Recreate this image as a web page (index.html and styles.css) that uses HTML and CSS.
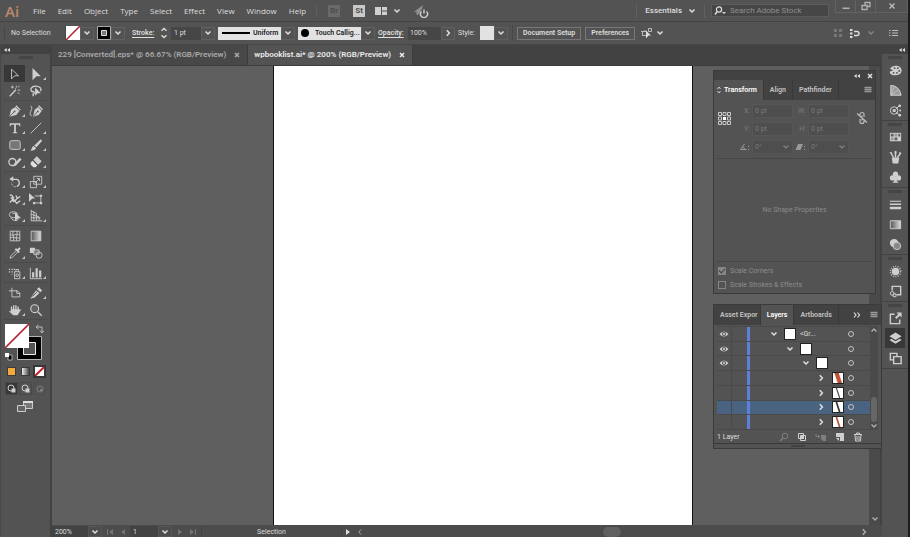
FILE: index.html
```html
<!DOCTYPE html>
<html lang="en">
<head>
<meta charset="utf-8">
<title>wpbooklist.ai</title>
<link rel="stylesheet" href="styles.css">
</head>
<body>
<svg class="symbols" aria-hidden="true">
  <symbol id="down" viewBox="0 0 8 8"><path d="M1.5 2.5 4 5l2.5-2.5" fill="none" stroke="currentColor" stroke-width="1.5"/></symbol>
  <symbol id="right" viewBox="0 0 8 8"><path d="M2.8 1.2 5.4 4 2.8 6.8" fill="none" stroke="currentColor" stroke-width="1.5"/></symbol>
  <symbol id="left" viewBox="0 0 8 8"><path d="M5 1.5 2.8 4 5 6.5" fill="none" stroke="currentColor"/></symbol>
  <symbol id="collapse" viewBox="0 0 8 8"><path d="M3.700 2v4L1 4zM7 2v4L4.300 4z" fill="currentColor"/></symbol>
  <symbol id="cross" viewBox="0 0 8 8"><path d="m2 2 4 4M6 2 2 6" fill="none" stroke="currentColor" stroke-width="1.5"/></symbol>
  <symbol id="menu" viewBox="0 0 8 8"><path d="M.5 1.5h7M.5 3.5h7M.5 5.5h7" stroke="currentColor" stroke-width="1.4"/></symbol>
  <symbol id="eye" viewBox="0 0 10 8"><path d="M.5 4Q5-1 9.500 4 5 9 .5 4z" fill="#cfcfcf"/><circle cx="5" cy="4" r="2" fill="#505050"/><circle cx="5" cy="4" r="1" fill="#ddd"/></symbol>
</svg>
<div class="app">
  <header class="menubar">
    <span class="logo">Ai</span>
    <nav class="menus">
      <button>File</button><button>Edit</button><button>Object</button><button>Type</button><button>Select</button><button>Effect</button><button>View</button><button>Window</button><button>Help</button>
    </nav>
    <button class="badge dim">Br</button>
    <button class="badge">St</button>
    <button class="arrange" aria-label="Arrange documents"><svg width="13" height="10" viewBox="0 0 13 10"><path d="M0 1h6v8H0zM7 1h5v3.500H7zM7 5.500h5V9H7z" fill="#d0d0d0"/></svg><svg class="chev"><use href="#down"/></svg></button>
    <button class="gpu" aria-label="GPU performance"><svg width="16" height="14" viewBox="0 0 16 14"><path d="M1 8 10 1 9 5l-4 5H3l1-2z" fill="#909090"/><path d="m4 11 3-4" stroke="#a0a0a0"/><path d="M8.500 7.500a3.500 3.500 0 1 0 5 0M11 5.500v4" fill="none" stroke="#d0d0d0" stroke-width="1.400"/></svg></button>
    <div class="menubar-end">
      <button class="workspace">Essentials <svg class="chev"><use href="#down"/></svg></button>
      <label class="search"><svg width="13" height="10" viewBox="0 0 13 10"><circle cx="5" cy="3.500" r="2.600" fill="none" stroke="#ddd" stroke-width="1.200"/><path d="M3.300 5.500 1 8.500" stroke="#ddd" stroke-width="1.500"/><path d="M8 6h4l-2 2z" fill="#ddd"/></svg><input type="search" placeholder="Search Adobe Stock" aria-label="Search Adobe Stock"></label>
      <div class="window-buttons">
        <button aria-label="Minimize"><svg width="10" height="10" viewBox="0 0 10 10"><path d="M1.500 6.500h7v1.600h-7z" fill="#b0b0b0"/></svg></button>
        <button aria-label="Restore"><svg width="10" height="10" viewBox="0 0 10 10"><path d="M1 4.500h5v4H1zM4 4V1.500h5v4H6" fill="none" stroke="#b0b0b0" stroke-width="1.300"/></svg></button>
        <button class="wide" aria-label="Close"><svg width="10" height="10" viewBox="0 0 10 10"><path d="m2.500 2.500 5 5M7.500 2.500l-5 5" stroke="#bbb" stroke-width="1.400"/></svg></button>
      </div>
    </div>
  </header>

  <section class="controlbar" aria-label="Control">
    <span class="selection">No Selection</span>
    <button class="swatch none" aria-label="Fill"><svg width="14" height="14" viewBox="0 0 14 14"><path d="M0 0h14v14H0z" fill="#fff"/><path d="M0 14 14 0" stroke="#b01f2b" stroke-width="1.500"/></svg></button>
    <button class="drop gap-lg" aria-label="Fill options"><svg class="chev"><use href="#down"/></svg></button>
    <button class="swatch" aria-label="Stroke color"><svg width="14" height="14" viewBox="0 0 14 14"><path d="M.5.500h13v13H.5z" fill="#000" stroke="#aaa"/><path d="M4.500 4.500h5v5h-5z" fill="#777" stroke="#ddd"/></svg></button>
    <button class="drop gap-lg" aria-label="Stroke options"><svg class="chev"><use href="#down"/></svg></button>
    <label class="link stroke-label" for="stroke">Stroke:</label>
    <button class="stepper" aria-label="Step stroke width"><svg width="10" height="14" viewBox="0 0 10 14"><path d="M2.500 4.800 5 2.500l2.500 2.300M2.500 9.200 5 11.500l2.500-2.300" fill="none" stroke="#ddd" stroke-width="1.400"/></svg></button>
    <input class="field stroke-field" id="stroke" value="1 pt">
    <button class="drop gap-sm" aria-label="Stroke widths"><svg class="chev"><use href="#down"/></svg></button>
    <div class="profile"><span class="profile-line"></span><select aria-label="Width profile"><option>Uniform</option></select></div>
    <button class="drop gap-sm" aria-label="Width profiles"><svg class="chev"><use href="#down"/></svg></button>
    <div class="profile brush"><span class="brush-dot"></span><select aria-label="Brush"><option>Touch Callig...</option></select></div>
    <button class="drop gap-sm" aria-label="Brushes"><svg class="chev"><use href="#down"/></svg></button>
    <label class="link opacity-label" for="opacity">Opacity:</label>
    <input class="field opacity-field" id="opacity" value="100%">
    <button class="drop gap-lg" aria-label="Opacity slider"><svg class="chev"><use href="#right"/></svg></button>
    <span class="style-label">Style:</span>
    <button class="swatch style-swatch" aria-label="Graphic style"></button>
    <button class="drop" aria-label="Graphic styles"><svg class="chev"><use href="#down"/></svg></button>
    <span class="divider"></span>
    <button class="push">Document Setup</button>
    <button class="push">Preferences</button>
    <button class="similar" aria-label="Select similar"><svg width="13" height="12" viewBox="0 0 13 12"><path d="M1.500 4.500h4v4h-4zM7.500 1.500h3v3h-3zM0 4.500h2M4 3v2" fill="none" stroke="#bbb"/><path d="m5 3.500 5 5H7.500L5 11.500z" fill="#ddd"/></svg></button>
    <svg class="chev"><use href="#down"/></svg>
    <div class="controlbar-end">
      <svg width="10" height="10" viewBox="0 0 10 10"><path d="M1 1h3v3H1zM6 1h3v3H6zM1 6h3v3H1zM6 6h3v3H6z" fill="#777"/></svg>
      <svg width="12" height="11" viewBox="0 0 12 11"><path d="M1 1h2.500v2H1zM1 4.500h2.500v2H1zM1 8h2.500v2H1z" fill="#ddd"/><path d="M5 3.500h3a2 2 0 0 1 0 4H5" fill="none" stroke="#ddd" stroke-width="1.400"/></svg>
      <svg class="chev faint"><use href="#down"/></svg>
      <button class="options" aria-label="Control menu"><svg width="9" height="8" viewBox="0 0 9 8"><path d="M0 1.500h1.500M3 1.500h6M0 4h1.500M3 4h6M0 6.500h1.500M3 6.500h6" stroke="#bbb"/></svg></button>
    </div>
  </section>

  <main class="body">
    <aside class="tools" aria-label="Tools">
      <div class="strip"><svg class="chev"><use href="#collapse"/></svg></div>
      <div class="grip"></div>
      <div class="tool-group">
        <button class="on" aria-label="Selection"><svg viewBox="0 0 16 16"><path d="m4 2.500 8 7.500H7.500L4 13.500z" class="line"/></svg></button>
        <button class="fly" aria-label="Direct selection"><svg viewBox="0 0 16 16"><path d="m4 1 9.500 9.500H8.500L4 15z"/></svg></button>
        <button aria-label="Magic wand"><svg viewBox="0 0 16 16"><path d="m2 14 7-7.500" class="thick"/><path d="M5 2v3M3.500 3.500h3M9.500 2v2M13 2l-1.500 2M11 7h3M11 10l2 1M8 4.500l1 1" class="line"/></svg></button>
        <button aria-label="Lasso"><svg viewBox="0 0 16 16"><path d="M4 9C0 7 3 2 8 2.500s7 3 5 5.500M3.500 9c2-2 4 2 1 2.500L5 14" class="line thick"/><path d="m7 4 6.500 6.500H10L7 13.500z"/></svg></button>
      </div>
      <div class="tool-group">
        <button class="fly" aria-label="Pen"><svg viewBox="0 0 16 16"><path d="m1.500 14.500 2-8 5-3 4.500 4.500-3.500 4.500z"/><path d="m9 2 5 5" class="thick"/><path d="m2 14 5-5" stroke="#535353"/><circle cx="7.500" cy="8.500" r="1" fill="#535353"/></svg></button>
        <button aria-label="Curvature"><svg viewBox="0 0 16 16"><path d="m4.500 14.500 2-8 4-3 4 4.500-3.500 4.500z"/><path d="m11 2 4.500 4.500" class="thick"/><path d="M2 2c4 4-4 8 1 12" class="line"/><path d="m5 14 4.500-5" stroke="#535353"/><circle cx="10" cy="8.500" r="1" fill="#535353"/></svg></button>
        <button class="fly" aria-label="Type"><svg viewBox="0 0 16 16"><path d="M2 2.500h12V6h-1l-.500-1.700H9v8.200l1.500.500v1h-5v-1L7 12.500V4.300H3.500L3 6H2z"/></svg></button>
        <button class="fly" aria-label="Line segment"><svg viewBox="0 0 16 16"><path d="M2 14 14 2" class="line"/></svg></button>
        <button class="fly" aria-label="Rounded rectangle"><svg viewBox="0 0 16 16"><rect x="2" y="3" width="12" height="10" rx="2" fill="#777" stroke="#d0d0d0"/></svg></button>
        <button class="fly" aria-label="Paintbrush"><svg viewBox="0 0 16 16"><path d="m13.500 1.500 1.500 1.500-6.500 7.500-2.500-2zM5.500 9 8 11.500c-1 3-4 3-7 3 2.500-1 2-5 4.500-5.500z"/></svg></button>
        <button class="fly" aria-label="Shaper"><svg viewBox="0 0 16 16"><circle cx="5" cy="8" r="4" class="line thick"/><path d="m6 13 1-3 6.500-7 2 2L9 12z"/></svg></button>
        <button class="fly" aria-label="Eraser"><svg viewBox="0 0 16 16"><path d="m9 1.500 5.500 5.500L10.500 11 5 5.500z"/><path d="m4 6.500 5.500 5.500-2 2H5L2 11V8.500z" fill="#e0e0e0"/></svg></button>
      </div>
      <div class="tool-group">
        <button class="fly" aria-label="Rotate"><svg viewBox="0 0 16 16"><path d="M4 5h6a4.200 4.200 0 0 1 0 8" class="line thick"/><path d="M9 13.500c-3 0-5-2-5-5" class="line" stroke-dasharray="1.500 1"/><path d="M6 1.500v6L1.500 4.500z"/></svg></button>
        <button class="fly" aria-label="Scale"><svg viewBox="0 0 16 16"><path d="M5.500 1.500h9v9h-9zM1.500 7.500h7v7h-7zM7 9l5-5M9 4h3v3" class="line"/></svg></button>
        <button class="fly" aria-label="Width"><svg viewBox="0 0 16 16"><path d="M2 4c3-2 4 2 3 4s2 4 4 1 3-2 5-4M2 12l4-4 4 5 4-3M9 4l2 4M3 7l4-1" class="line thick"/></svg></button>
        <button aria-label="Free transform"><svg viewBox="0 0 16 16"><path d="M6.500 4.500h7v8h-8" class="line"/><path d="M12.500 3h2.500v2.500h-2.500zM12.500 11.500h2.500v2.500h-2.500zM4.500 11.500h2.500v2.500h-2.500zM0 1l7 6.500H4L0 11z"/></svg></button>
        <button class="fly" aria-label="Shape builder"><svg viewBox="0 0 16 16"><ellipse cx="6" cy="6.500" rx="4.500" ry="3.500" class="line"/><path d="M4 10c0 4 8 4 8 1M5 5h6" class="line"/><path d="m8 4 7 6.500h-3.500L8 14z"/></svg></button>
        <button class="fly" aria-label="Perspective grid"><svg viewBox="0 0 16 16"><path d="M2.500 1v12.500H15M5.500 3v10M2.500 2l6 3v8M2.500 6l9 3v4M2.500 10H13" class="line"/></svg></button>
      </div>
      <div class="tool-group">
        <button aria-label="Mesh"><svg viewBox="0 0 16 16"><path d="M2.500 2.500h11v11h-11zM6 2.500C4 7 8 9 6 13.500M10 2.500c2 4-2 7 0 11M2.500 6c4 3 7-2 11 1M2.500 10c4-2 7 2 11 0" class="line"/></svg></button>
        <button aria-label="Gradient"><svg viewBox="0 0 16 16"><defs><linearGradient id="grad"><stop stop-color="#555"/><stop offset="1" stop-color="#ddd"/></linearGradient></defs><path d="M2.500 2.500h11v11h-11z" fill="url(#grad)" stroke="#ccc"/></svg></button>
        <button class="fly" aria-label="Eyedropper"><svg viewBox="0 0 16 16"><path d="m9 2.500 2 1 2-2 1.500 1.500-2 2 1 2-1.500 1L7.500 4z"/><path d="m9 5.500-6 6L2.500 14 5 13l6-6" class="line"/></svg></button>
        <button aria-label="Blend"><svg viewBox="0 0 16 16"><path d="M1 2h6v6H1z"/><path d="M5.500 4.500h6v5h-6z" fill="#777" stroke="#ccc"/><circle cx="11.500" cy="10.500" r="3.500" class="line"/></svg></button>
      </div>
      <div class="tool-group">
        <button class="fly" aria-label="Symbol sprayer"><svg viewBox="0 0 16 16"><path d="M7.500 6.500h6v8h-6zM9 6V4h3v2" class="line"/><circle cx="10.500" cy="10.500" r="1.500" class="line"/><path d="M1 3h1.500v1.500H1zM4 3h1.500v1.500H4zM6.500 3H8v1.500H6.500zM1 6h1.500v1.500H1zM4 6h1.500v1.500H4zM4 9h1v1H4z"/></svg></button>
        <button class="fly" aria-label="Column graph"><svg viewBox="0 0 16 16"><path d="M1.500 2v12.500H15" class="line"/><path d="M3.500 7H6v6H3.500zM7.500 2.500H10V13H7.500zM11.500 5H14v8h-2.500z"/></svg></button>
      </div>
      <div class="tool-group">
        <button aria-label="Artboard"><svg viewBox="0 0 16 16"><path d="M4.500 2v10.500h9V8l-3-2.500H1" class="line"/><path d="M10 5v3.500h3.500" class="line"/></svg></button>
        <button class="fly" aria-label="Slice"><svg viewBox="0 0 16 16"><path d="M1.500 14.500 8 5l4 3-5.500 5zM9 3.500l2.500-2L15 5l-2 2z"/><path d="m4 12 5-5" stroke="#535353"/></svg></button>
        <button class="fly" aria-label="Hand"><svg viewBox="0 0 16 16"><path d="M4 9V4M6.500 8V2.500M9 8V2.500M11.500 9V4" class="thick"/><path d="M3.200 7h9L15 7.500 11 14H6L1 9.500l1.500-.500 1 1z"/></svg></button>
        <button aria-label="Zoom"><svg viewBox="0 0 16 16"><circle cx="6.500" cy="6.500" r="4.500" fill="#626262" stroke="#d0d0d0" stroke-width="1.300"/><path d="m10 10 4.500 4.500" class="thick"/></svg></button>
      </div>
      <button class="paint" aria-label="Fill and stroke"><svg width="40" height="40" viewBox="0 0 40 40"><path d="M13.500 13.500h24v23h-24z" fill="#000" stroke="#b5b5b5"/><path d="M19.500 19.500h12v12h-12z" fill="#555" stroke="#eee"/><path d="M1 1h24v24H1z" fill="#fff"/><path d="M1 25 25 1" stroke="#b01f2b" stroke-width="1.700"/><path d="M33 4h5v5M34.500 2 32 4l2.500 2M36 7.500l2 2.500 2-2.500" fill="none" stroke="#bbb"/><path d="M4 32h4v5H4z" fill="#000" stroke="#aaa"/><path d="M1 30h4v4H1z" fill="#fff"/></svg></button>
      <div class="mini-row">
        <button aria-label="Color"><i class="chip orange"></i></button><button aria-label="Gradient fill"><i class="chip ramp"></i></button><button class="on" aria-label="None"><svg width="9" height="9" viewBox="0 0 9 9"><path d="M0 0h9v9H0z" fill="#fff"/><path d="m0 9 9-9" stroke="#c4202b" stroke-width="2"/></svg></button>
      </div>
      <div class="mini-row modes">
        <button class="on" aria-label="Draw normal"><svg width="10" height="10" viewBox="0 0 10 10"><circle cx="4" cy="4" r="3" class="line"/><path d="M4.500 4.500h4v4h-4z"/></svg></button><button aria-label="Draw behind"><svg width="10" height="10" viewBox="0 0 10 10"><path d="M4.500 4.500h4v4h-4z"/><circle cx="4" cy="4" r="3" fill="#555" class="line"/></svg></button><button class="faint" aria-label="Draw inside"><svg width="10" height="10" viewBox="0 0 10 10"><circle cx="5" cy="5" r="3" class="line"/><path d="M5 5h2v2H5z"/></svg></button>
      </div>
      <button class="screen" aria-label="Screen mode"><svg width="17" height="12" viewBox="0 0 17 12"><path d="M6.500.500h9v7h-9z" fill="#777" stroke="#ccc"/><path d="M.5 4.500h8v6h-8z" fill="#666" stroke="#ccc"/><path d="M6 1h10" stroke="#ddd" stroke-width="2"/></svg></button>
    </aside>

    <section class="document">
      <div class="tabs">
        <div class="tab"><span>229 [Converted].eps* @ 66.67% (RGB/Preview)</span><button aria-label="Close tab"><svg class="chev"><use href="#cross"/></svg></button></div>
        <div class="tab active"><span>wpbooklist.ai* @ 200% (RGB/Preview)</span><button aria-label="Close tab"><svg class="chev"><use href="#cross"/></svg></button></div>
      </div>
      <div class="view">
        <div class="canvas"><div class="artboard"></div></div>
        <div class="vscroll"><svg class="chev"><use href="#down"/></svg></div>

        <div class="panels">
          <section class="panel transform">
            <div class="panel-top"><svg class="chev"><use href="#collapse"/></svg><svg class="chev"><use href="#cross"/></svg></div>
            <div class="panel-tabs"><button class="on"><svg width="6" height="8" viewBox="0 0 6 8"><path d="m1.500 3 1.500-2 1.500 2M1.500 5 3 7l1.500-2" fill="none" stroke="#ccc"/></svg>Transform</button><button>Align</button><button>Pathfinder</button><svg class="panel-menu"><use href="#menu"/></svg></div>
            <div class="transform-fields">
              <svg class="refpoint" width="15" height="15" viewBox="0 0 15 15"><path d="M1.500 1.500h3v3h-3zM6 1.500h3v3H6zM10.500 1.500h3v3h-3zM1.500 6h3v3h-3zM10.500 6h3v3h-3zM1.500 10.500h3v3h-3zM6 10.500h3v3H6zM10.500 10.500h3v3h-3z" fill="none" stroke="#c8c8c8"/><path d="M6 6h3v3H6z" fill="#fff"/></svg>
              <div class="fields">
                <label for="x">X:</label><input id="x" value="0 pt" disabled><label for="w">W:</label><input id="w" value="0 pt" disabled>
                <label for="y">Y:</label><input id="y" value="0 pt" disabled><label for="h">H:</label><input id="h" value="0 pt" disabled>
                <label for="angle"><svg width="11" height="8" viewBox="0 0 11 8"><path d="M5.500 1 1.500 6.500h6M3.500 4q2 0 2 2.500" fill="none" stroke="#999"/><path d="M9 3h1v1H9zM9 6h1v1H9z" fill="#999"/></svg></label><div class="select-box"><select id="angle" disabled><option>0°</option></select><svg class="chev"><use href="#down"/></svg></div>
                <label for="shear"><svg width="11" height="8" viewBox="0 0 11 8"><path d="M3 1h5L5.500 7h-5z" fill="#999"/><path d="M9 3h1v1H9zM9 6h1v1H9z" fill="#999"/></svg></label><div class="select-box"><select id="shear" disabled><option>0°</option></select><svg class="chev"><use href="#down"/></svg></div>
              </div>
              <svg class="chain" width="12" height="14" viewBox="0 0 12 14"><path d="M4 6V3.500a2 2 0 0 1 4 0V6M4 8v2.500a2 2 0 0 0 4 0V8M6 4.500v5M1 2.500l10 9" fill="none" stroke="#bbb" stroke-width="1.200"/></svg>
            </div>
            <p class="empty">No Shape Properties</p>
            <div class="checks">
              <label><input type="checkbox" checked disabled>Scale Corners</label>
              <label><input type="checkbox" disabled>Scale Strokes &amp; Effects</label>
            </div>
          </section>

          <section class="panel layers">
            <div class="panel-tabs"><button class="first">Asset Expor</button><button class="on">Layers</button><button>Artboards</button><svg class="more" width="8" height="8" viewBox="0 0 8 8"><path d="m1 1.500 2 2.500-2 2.500M4.500 1.500l2 2.500-2 2.500" fill="none" stroke="#ddd" stroke-width="1.200"/></svg><svg class="panel-menu"><use href="#menu"/></svg></div>
            <div class="layer-area">
              <ul class="layer-list">
                <li><button class="eye" aria-label="Visibility"><svg><use href="#eye"/></svg></button><i class="lock"></i><i class="color"></i><svg class="chev"><use href="#down"/></svg><i class="thumb"></i><span>&lt;Gr...</span><i class="target"></i></li>
                <li class="in1"><button class="eye" aria-label="Visibility"><svg><use href="#eye"/></svg></button><i class="lock"></i><i class="color"></i><svg class="chev"><use href="#down"/></svg><i class="thumb"></i><i class="target"></i></li>
                <li class="in2"><button class="eye" aria-label="Visibility"><svg><use href="#eye"/></svg></button><i class="lock"></i><i class="color"></i><svg class="chev"><use href="#down"/></svg><i class="thumb"></i><i class="target"></i></li>
                <li class="in3"><button class="eye" aria-label="Visibility"></button><i class="lock"></i><i class="color"></i><svg class="chev"><use href="#right"/></svg><svg class="thumb" viewBox="0 0 12 12"><path d="m2 0 4 12h4.500L6.500 0z" fill="#c9502f" stroke="#8c3a22" stroke-width=".5"/></svg><i class="target"></i></li>
                <li class="in3"><button class="eye" aria-label="Visibility"></button><i class="lock"></i><i class="color"></i><svg class="chev"><use href="#right"/></svg><svg class="thumb" viewBox="0 0 12 12"><path d="m4 0 4 12" stroke="#555" stroke-width="1.500"/></svg><i class="target"></i></li>
                <li class="in3 picked"><button class="eye" aria-label="Visibility"></button><i class="lock"></i><i class="color"></i><svg class="chev"><use href="#right"/></svg><svg class="thumb" viewBox="0 0 12 12"><path d="m4 0 4 12" stroke="#333" stroke-width="2"/></svg><i class="target"></i></li>
                <li class="in3"><button class="eye" aria-label="Visibility"></button><i class="lock"></i><i class="color"></i><svg class="chev"><use href="#right"/></svg><svg class="thumb" viewBox="0 0 12 12"><path d="m4 0 4 12" stroke="#b8502f" stroke-width="2"/></svg><i class="target"></i></li>
              </ul>
              <div class="list-scroll"><svg class="chev flip"><use href="#down"/></svg><i></i><svg class="chev"><use href="#down"/></svg></div>
            </div>
            <div class="layer-foot">
              <span>1 Layer</span>
              <button class="faint" aria-label="Locate object"><svg width="10" height="10" viewBox="0 0 10 10"><circle cx="6" cy="4" r="2.800" class="line"/><path d="M4 6 1 9" class="line thick"/></svg></button>
              <button aria-label="Clipping mask"><svg width="10" height="10" viewBox="0 0 10 10"><path d="M1.500 1.500h5v5h-5z" class="line"/><path d="M3.500 3.500h5v5h-5z" class="line"/><path d="M4 4h3v3H4z"/></svg></button>
              <button class="faint" aria-label="New sublayer"><svg width="12" height="10" viewBox="0 0 12 10"><path d="M1 2v2.500h3M3 3l2 1.500L3 6" class="line"/><path d="M6 3h5v6H8L6 7z"/></svg></button>
              <button aria-label="New layer"><svg width="10" height="10" viewBox="0 0 10 10"><path d="M1 1h8v8H5V5H1z"/><path d="m1 6 3 3V6z"/></svg></button>
              <button aria-label="Delete"><svg width="10" height="10" viewBox="0 0 10 10"><path d="M1 2.500h8M3.500 2V1h3v1M2 3l.5 6h5L8 3M4 4v4M6 4v4" class="line"/></svg></button>
            </div>
            <div class="panel-bottom"><i></i></div>
          </section>
        </div>
      </div>
      <footer class="status">
        <input class="zoom" value="200%" aria-label="Zoom"><button class="drop" aria-label="Zoom levels"><svg class="chev"><use href="#down"/></svg></button>
        <button class="nav" aria-label="First artboard"><svg width="8" height="8" viewBox="0 0 8 8"><path d="M1 1h1v6H1zM7 1v6L3 4z"/></svg></button><button class="nav" aria-label="Previous artboard"><svg width="8" height="8" viewBox="0 0 8 8"><path d="M6 1v6L2 4z"/></svg></button>
        <input class="page" value="1" aria-label="Artboard"><button class="drop" aria-label="Artboards"><svg class="chev"><use href="#down"/></svg></button>
        <button class="nav" aria-label="Next artboard"><svg width="8" height="8" viewBox="0 0 8 8"><path d="M2 1v6l4-3z"/></svg></button><button class="nav" aria-label="Last artboard"><svg width="8" height="8" viewBox="0 0 8 8"><path d="M6 1h1v6H6zM1 1v6l4-3z"/></svg></button>
        <span class="current">Selection</span>
        <button class="play" aria-label="Status menu"><svg width="8" height="8" viewBox="0 0 8 8"><path d="M2 1v6l4-3z" fill="#ddd"/></svg></button>
        <div class="hscroll"><svg class="chev"><use href="#left"/></svg><i></i><svg class="chev"><use href="#right"/></svg></div>
      </footer>
    </section>

    <aside class="dock" aria-label="Panels">
      <div class="strip"><svg class="chev"><use href="#collapse"/></svg></div>
      <div class="dock-group"><div class="grip"></div>
        <button aria-label="Color"><svg viewBox="0 0 16 16"><path d="M8 3c4 0 6.500 2 6.500 5 0 4-4 5-7 5S2 12 2 10c0-2 2-1 3-2S1.500 7 2.500 5.500 6 3 8 3z"/><g fill="#535353"><circle cx="7" cy="5.500" r="1"/><circle cx="10.500" cy="5.500" r="1"/><circle cx="12" cy="8.500" r="1"/><circle cx="9.500" cy="10.500" r="1"/><circle cx="6" cy="10.500" r="1"/></g></svg></button>
        <button aria-label="Color guide"><svg viewBox="0 0 16 16"><path d="M3 3q9 0 11 10H3z" fill="#999"/><path d="M3 2.500q9 .500 11 10.500H3z" fill="none" stroke="#ddd"/><path d="M3 13 7 3.500M3 13l8-5.500" fill="none" stroke="#c4c4c4"/></svg></button>
        <button aria-label="Color themes"><svg viewBox="0 0 16 16"><circle cx="6.500" cy="8" r="4" class="line"/><circle cx="6.500" cy="8" r="1.700"/><path d="m8 7 4-4M8 9l4 4" class="line"/><circle cx="12.500" cy="3" r="1.500"/><circle cx="12.500" cy="13" r="1.500"/><circle cx="13" cy="8" r="1"/></svg></button>
      </div>
      <div class="dock-group"><div class="grip"></div>
        <button aria-label="Swatches"><svg viewBox="0 0 16 16"><path d="M2 3h12v9H2z"/><path d="M3 4h3v3H3zM11 4h2v3h-2zM7 8h3v3H7z" fill="#606060"/><path d="M3 8h3v3H3zM7 4h3v3H7z" fill="#999"/></svg></button>
        <button aria-label="Brushes"><svg viewBox="0 0 16 16"><path d="M4 8h8l-1 6.500H5z"/><path d="M6 8 3 3M8 8V2M10 8l3-4" class="thick"/><path d="M1.500 2.500 4 2l.500 3zM7 1h2v3H7zM12 2l2.500 1L12 6z"/></svg></button>
        <button aria-label="Symbols"><svg viewBox="0 0 16 16"><circle cx="8" cy="4.500" r="2.800"/><circle cx="4.800" cy="8.500" r="2.800"/><circle cx="11.200" cy="8.500" r="2.800"/><path d="M7 7h2l.500 5 2 1.500h-7l2-1.500z"/></svg></button>
      </div>
      <div class="dock-group"><div class="grip"></div>
        <button aria-label="Stroke"><svg viewBox="0 0 16 16"><path d="M2 4h12v1H2zM2 7h12v1.500H2zM2 10.500h12v2.500H2z"/></svg></button>
        <button aria-label="Gradient"><svg viewBox="0 0 16 16"><path d="M2.500 4h11v8.500h-11z" fill="url(#grad)" stroke="#ccc"/></svg></button>
        <button aria-label="Transparency"><svg viewBox="0 0 16 16"><circle cx="6.500" cy="6.500" r="4.500"/><circle cx="9.500" cy="9.500" r="4" fill="#888" stroke="#ccc"/></svg></button>
      </div>
      <div class="dock-group"><div class="grip"></div>
        <button aria-label="Appearance"><svg viewBox="0 0 16 16"><circle cx="8" cy="8" r="4"/><circle cx="8" cy="8" r="5.500" fill="none" stroke="#ccc" stroke-width="1.500" stroke-dasharray="1 1.500"/></svg></button>
        <button aria-label="Graphic styles"><svg viewBox="0 0 16 16"><path d="M4.500 7V2.500h9v9H9" class="line thick"/><circle cx="4.500" cy="10" r="2" class="line"/><path d="M5.500 10.500h3v3h-3z" class="line"/></svg></button>
      </div>
      <div class="dock-group"><div class="grip"></div>
        <button aria-label="Asset export"><svg viewBox="0 0 16 16"><path d="M7 3.500H2.500v10h10V9" class="line thick"/><path d="M9 1.500h5.500V7L12.500 5 9 8.500 7.500 7 11 3.500z"/></svg></button>
        <button class="on" aria-label="Layers"><svg viewBox="0 0 16 16"><path d="m8 1.500 6.500 4L8 9.500l-6.500-4z"/><path d="m1.500 9.500 2-1.200L8 11l4.500-2.700 2 1.200L8 13.500z"/></svg></button>
        <button aria-label="Artboards"><svg viewBox="0 0 16 16"><path d="M5.500 9.500h-3v-7h7v3M6 6h8v7.500H6z" class="line thick"/></svg></button>
      </div>
    </aside>
  </main>
</div>
</body>
</html>
```

FILE: styles.css
```css
* { box-sizing: border-box; }

html, body { height: 100%; margin: 0; }

body {
  overflow: hidden;
  background: #535353;
  color: #dedede;
  font: 7px/12px Roboto, "Noto Sans", sans-serif;
}

button, input, select {
  margin: 0;
  padding: 0;
  border: 0;
  border-radius: 0;
  background: none;
  color: inherit;
  font: inherit;
  appearance: none;
  min-width: 0;
}

select { opacity: 1; }
svg { display: block; flex: none; fill: #cfcfcf; }
.symbols { position: absolute; width: 0; height: 0; }
.line { fill: none; stroke: #cfcfcf; stroke-width: 1; }
.thick { stroke: #cfcfcf; stroke-width: 1.5; }
.chev { width: 8px; height: 8px; }
.faint { opacity: 0.35; }

.app { display: flex; flex-direction: column; height: 100%; border-right: 2px solid #1c1c1c; }

/* Menu bar */
.menubar { display: flex; align-items: center; height: 22px; flex: none; border-bottom: 1px solid #444; font-size: 8px; }
.logo { width: 27px; padding-left: 5px; color: #bd8869; font-family: "Open Sans", sans-serif; font-size: 15px; font-weight: 600; line-height: 20px; }
.menus { display: flex; gap: 12px; padding: 0 10px 0 6px; margin-right: 11px; border-right: 1px solid #5f5f5f; font-family: "Open Sans", sans-serif; }
.badge { width: 12px; height: 12px; margin-right: 13px; background: #c9c9c9; color: #444; font-weight: 600; line-height: 12px; }
.badge.dim { background: #696969; color: #4c4c4c; }
.arrange { display: flex; align-items: center; gap: 5px; margin: 0 12px 0 -3px; }
.menubar-end { display: flex; align-items: center; height: 100%; margin-left: auto; }
.workspace { display: flex; align-items: center; gap: 6px; height: 14px; padding: 0 8px; border: solid #606060; border-width: 0 1px; font-weight: 500; }
.search { display: flex; align-items: center; gap: 3px; width: 118px; height: 13px; margin: 0 6px; padding-left: 2px; border: 1px solid #5c5c5c; background: #464646; }
.search input { flex: 1; }
.search input::placeholder { color: #8f8f8f; opacity: 1; }
.window-buttons { display: flex; align-self: flex-start; }
.window-buttons button { display: grid; place-items: center; width: 20px; height: 13px; border: 1px solid #626262; border-width: 0 0 1px 1px; }
.window-buttons .wide { width: 33px; border-right-width: 1px; }

/* Control bar */
.controlbar { display: flex; align-items: center; height: 23px; flex: none; border-bottom: 1px solid #464646; }
.selection { width: 62px; margin-left: 4px; padding-left: 6px; border: solid #474747; border-width: 0 1px; line-height: 14px; }
.swatch { width: 14px; height: 14px; flex: none; }
.drop { display: grid; place-items: center; width: 14px; height: 13px; flex: none; border: 1px solid #606060; }
.gap-sm { margin-right: 3px; }
.gap-lg { margin-right: 3px; }
.link { text-decoration: underline; text-underline-offset: 2px; font-weight: 600; }
.stroke-label { width: 27px; margin-left: 4px; }
.stepper { width: 10px; margin-right: 2px; }
.field { height: 13px; background: #464646; }
.stroke-field { width: 30px; padding-left: 3px; }
.profile { display: flex; align-items: center; gap: 3px; width: 63px; height: 13px; padding-left: 4px; background: #e2e2e2; color: #222; }
.profile select { flex: 1; font-weight: 600; opacity: 1; }
.profile-line { width: 28px; height: 2px; background: #000; }
.brush { gap: 6px; padding-left: 3px; }
.brush-dot { width: 8px; height: 8px; border-radius: 50%; background: #000; }
.opacity-label { width: 30px; }
.opacity-field { width: 33px; padding-left: 2px; }
.style-label { width: 22px; }
.style-swatch { background: #e2e2e2; }
.divider { width: 1px; height: 16px; margin: 0 4px; background: #474747; }
.push { height: 13px; margin-right: 4px; padding: 0 5px; border: 1px solid #777; font-weight: 600; line-height: 11px; }
.similar { margin: 0 2px; }
.controlbar-end { display: flex; align-items: center; gap: 6px; margin-left: auto; padding-right: 10px; }
.options { margin-left: 8px; }

/* Work area */
.body { display: flex; flex: 1; min-height: 0; background: #424242; }
.strip { display: flex; align-items: center; height: 9px; background: #424242; }
.strip .chev { margin: 0 2px; }
.grip { width: 14px; height: 3px; margin: 2px auto 1px; background: #454545; }

.tools { width: 50px; flex: none; background: #535353; border-left: 1px solid #484848; }
.tools .grip { margin: 2px auto 6px; }
.tool-group { display: grid; grid-template-columns: 21px 21px; margin: 0 3px 1px; padding-bottom: 1px; border-bottom: 1px solid #4a4a4a; }
.tool-group button { position: relative; display: grid; place-items: center; height: 17px; }
.tool-group svg { width: 14px; height: 14px; }
.tool-group .on, .mini-row .on { background: #383838; }
.fly::after { content: ""; position: absolute; right: 0; bottom: 2px; border: solid; border-width: 0 0 3px 3px; border-color: transparent transparent #c4c4c4; }
.paint { display: block; margin: 3px 0 2px 3px; }
.mini-row { display: flex; justify-content: space-between; margin: 0 4px 4px; }
.mini-row button { display: grid; place-items: center; width: 13px; height: 13px; }
.modes button { border: 1px solid #494949; }
.chip { width: 9px; height: 9px; border: 1px solid #3b3b3b; }
.orange { background: #f6a93b; }
.ramp { background: linear-gradient(90deg, #eee, #444); }
.screen { display: block; margin: 6px auto; }

.document { display: flex; flex-direction: column; flex: 1; min-width: 0; margin-left: 2px; }
.tabs { display: flex; height: 21px; flex: none; background: #424242; border-bottom: 1px solid #3c3c3c; }
.tab { display: flex; align-items: center; gap: 7px; padding: 0 6px; background: #484848; color: #aaa; border-right: 1px solid #3c3c3c; font-size: 8px; font-weight: 600; white-space: nowrap; }
.tab.active { background: #535353; color: #ececec; }

.view { position: relative; display: flex; flex: 1; min-height: 0; margin-right: 2px; }
.canvas { flex: 1; background: #5f5f5f; }
.artboard { width: 51.4%; height: 100%; margin-left: 27%; background: #fff; border: solid #111; border-width: 0 1px; }
.vscroll { display: flex; align-items: flex-end; justify-content: center; width: 11px; padding-bottom: 2px; background: #4a4a4a; color: #aaa; }

/* Floating panels */
.panels { position: absolute; top: 4px; right: -2px; width: 169px; }
.panel { background: #535353; border: 1px solid #3a3a3a; }
.transform { margin-right: 6px; }
.panel-top { display: flex; align-items: center; justify-content: flex-end; gap: 5px; height: 9px; padding-right: 1px; background: #424242; }
.panel-tabs { display: flex; align-items: center; height: 20px; background: #424242; }
.panel-tabs button { display: flex; align-items: center; gap: 2px; height: 100%; padding: 0 6px; border-right: 1px solid #393939; color: #c2c2c2; font-weight: 600; white-space: nowrap; }
.panel-tabs .on { background: #535353; color: #fff; }
.transform .panel-tabs button:first-child { padding-left: 2px; }
.panel-menu { width: 8px; height: 8px; margin: 0 3px 0 auto; color: #999; }
.transform-fields { display: flex; align-items: flex-start; gap: 7px; margin: 0 3px; padding: 4px 0; border-bottom: 1px solid #464646; }
.refpoint { margin-top: 7px; }
.fields { display: grid; grid-template-columns: 11px 41px 11px 41px; gap: 4px 2px; color: #7b7b7b; }
.fields label { display: flex; align-items: center; justify-content: flex-end; height: 14px; }
.fields input, .select-box { height: 14px; padding-left: 2px; background: #4e4e4e; border: 1px solid #565656; }
.select-box { display: flex; align-items: center; justify-content: space-between; padding-right: 2px; }
.select-box select { flex: 1; opacity: 1; }
.chain { margin-top: 7px; }
.empty { display: grid; place-items: center; height: 103px; margin: 0 3px; border-bottom: 1px solid #464646; color: #8a8a8a; }
.checks { padding: 2px 4px 1px; color: #8d8d8d; }
.checks label { display: flex; align-items: center; gap: 4px; height: 14px; }
.checks input { width: 8px; height: 8px; border: 1px solid #858585; }
.checks input:checked { background: #888; }
.checks input:checked::after { content: ""; display: block; width: 5px; height: 3px; border: solid #444; border-width: 0 0 1px 1px; transform: rotate(-45deg); }

.layers { margin-top: 10px; }
.layers .first { padding-right: 2px; }
.more { margin-left: auto; }
.layers .panel-menu { margin-left: 9px; }
.layer-area { display: flex; height: 104px; margin: 1px 3px 0; }
.layer-list { display: flex; flex-direction: column; flex: 1; margin: 0; padding: 0; list-style: none; border-bottom: 1px solid #494949; }
.layer-list li { display: flex; align-items: center; flex: 1; min-height: 0; padding-right: 16px; border-top: 1px solid #4a4a4a; }
.layer-list li.picked { background: #4a6380; }
.eye { display: grid; place-items: center; width: 15px; height: 100%; border-right: 1px solid #4a4a4a; }
.eye svg { width: 10px; height: 8px; }
.lock { width: 15px; }
.color { width: 3px; height: 100%; margin-right: 20px; background: #5c7fdc; }
.in1 .color { margin-right: 36px; }
.in2 .color { margin-right: 52px; }
.in3 .color { margin-right: 67px; }
.thumb { width: 12px; height: 12px; margin: 0 4px 0 6px; background: #fff; border: 1px solid #222; }
.target { width: 6px; height: 6px; margin-left: auto; border: 1px solid #c4c4c4; border-radius: 50%; }
.in3 .thumb { margin-left: 7px; margin-right: 0; }
.list-scroll { display: flex; flex-direction: column; align-items: center; width: 8px; background: #4a4a4a; color: #aaa; }
.list-scroll i { width: 6px; height: 25px; margin-top: auto; border-radius: 3px; background: #666; }
.flip { transform: rotate(180deg); }
.layer-foot { display: flex; align-items: center; gap: 8px; height: 13px; padding: 0 18px 0 3px; }
.layer-foot span { margin-right: auto; }
.panel-bottom { display: grid; place-items: center; height: 5px; border-top: 1px solid #3a3a3a; }
.panel-bottom i { width: 14px; height: 2px; background: #424242; }

/* Status bar */
.status { display: flex; align-items: center; height: 12px; flex: none; padding-top: 1px; background: #4c4c4c; }
.status .drop { border-color: #565656; height: 11px; }
.zoom { width: 36px; padding-left: 3px; background: #434343; }
.page { width: 28px; padding-left: 3px; margin-left: 2px; background: #434343; }
.nav { width: 13px; padding-left: 4px; opacity: 0.3; }
.current { width: 141px; margin-left: 3px; border: solid #434343; border-width: 0 1px; text-align: center; }
.play { width: 12px; padding-left: 2px; }
.hscroll { display: flex; align-items: center; justify-content: space-between; flex: 1; padding: 0 14px 0 2px; color: #aaa; }
.hscroll i { width: 18px; height: 10px; border-radius: 5px; background: #606060; }

.dock { width: 26px; flex: none; background: #535353; }
.dock .strip { justify-content: flex-end; }
.dock-group { border-bottom: 1px solid #424242; }
.dock-group button { display: grid; place-items: center; width: 20px; height: 20px; margin: 0 auto; }
.dock-group svg { width: 15px; height: 15px; }
.dock-group .on { background: #383838; }
```
